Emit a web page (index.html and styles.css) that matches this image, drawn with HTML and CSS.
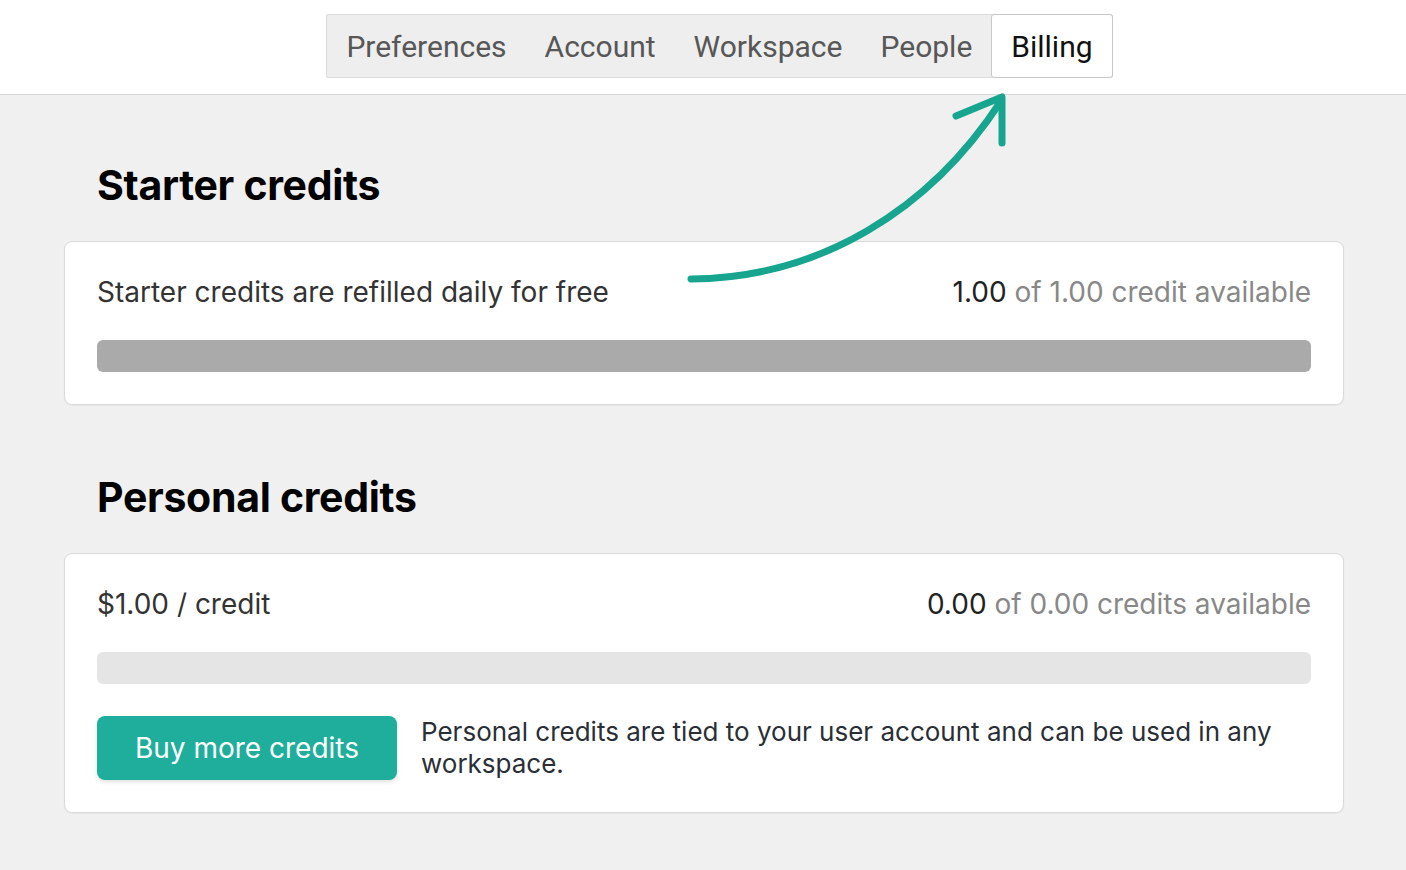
FILE: index.html
```html
<!DOCTYPE html>
<html>
<head>
<meta charset="utf-8">
<link rel="stylesheet" href="styles.css">
</head>
<body>
<header class="topbar">
  <nav class="tabs">
    <span class="tab">Preferences</span>
    <span class="tab">Account</span>
    <span class="tab">Workspace</span>
    <span class="tab">People</span>
    <span class="tab active">Billing</span>
  </nav>
</header>
<main class="content">
  <section class="section">
    <h2 class="heading">Starter credits</h2>
    <div class="card">
      <div class="row">
        <span class="label">Starter credits are refilled daily for free</span>
        <span class="amount"><b>1.00</b> of 1.00 credit available</span>
      </div>
      <div class="bar bar-full"></div>
    </div>
  </section>
  <section class="section">
    <h2 class="heading">Personal credits</h2>
    <div class="card">
      <div class="row">
        <span class="label">$1.00 / credit</span>
        <span class="amount"><b>0.00</b> of 0.00 credits available</span>
      </div>
      <div class="bar bar-empty"></div>
      <div class="actions">
        <button class="buy">Buy more credits</button>
        <p class="note">Personal credits are tied to your user account and can be used in any workspace.</p>
      </div>
    </div>
  </section>
</main>
<svg class="arrow" width="1406" height="300" viewBox="0 0 1406 300">
  <path d="M691 279 C 820 278, 930 210, 1001 101" fill="none" stroke="#17a590" stroke-width="7" stroke-linecap="round"/>
  <path d="M956 116 L 1002 97 L 1002 143" fill="none" stroke="#17a590" stroke-width="7" stroke-linecap="round" stroke-linejoin="round"/>
</svg>
</body>
</html>
```
FILE: styles.css
```css
* { box-sizing: border-box; }
html, body { margin: 0; padding: 0; }
body {
  background: #f0f0f0;
  font-family: Inter, "Noto Sans", sans-serif;
  color: #333;
  width: 1406px;
  height: 870px;
  overflow: hidden;
  position: relative;
}
.topbar {
  background: #fff;
  height: 95px;
  border-bottom: 1px solid #d6d6d6;
  display: flex;
  justify-content: center;
  padding-top: 14px;
}
.tabs {
  display: flex;
  height: 64px;
  background: #eeeeee;
  border: 1px solid #dcdcdc;
  border-radius: 2px;
  margin-left: 33px;
}
.tab {
  font-family: Roboto, sans-serif;
  font-size: 30px;
  color: #575757;
  padding: 0 19px;
  display: flex;
  align-items: center;
  height: 62px;
}
.tab.active {
  background: #fff;
  color: #111;
  border: 1px solid #c8c8c8;
  border-radius: 3px;
  height: 64px;
  margin: -1px -1px -1px 0;
}
.content {
  padding: 0 62px 0 64px;
}
.section { padding-top: 62px; }
.section + .section { padding-top: 64px; }
.heading {
  margin: 0 0 28px 33px;
  font-size: 41px;
  font-weight: 700;
  color: #000;
  line-height: 56px;
  letter-spacing: -0.3px;
}
.card {
  background: #fff;
  border: 1px solid #dadada;
  border-radius: 8px;
  padding: 30px 32px 32px 32px;
  box-shadow: 0 1px 2px rgba(0,0,0,0.04);
}
.row {
  display: flex;
  justify-content: space-between;
  align-items: center;
  font-size: 28px;
  line-height: 40px;
}
.label { color: #333; }
.amount { color: #888; }
.amount b { font-weight: 400; color: #222; }
.bar {
  height: 32px;
  border-radius: 6px;
  margin-top: 28px;
}
.bar-full { background: #aaaaaa; }
.bar-empty { background: #e5e5e5; }
.actions {
  display: flex;
  align-items: center;
  gap: 24px;
  margin-top: 32px;
}
.buy {
  flex: none;
  width: 300px;
  height: 64px;
  background: #1fae9c;
  color: #fff;
  border: none;
  border-radius: 8px;
  font-family: Inter, sans-serif;
  font-size: 28px;
  box-shadow: 0 2px 4px rgba(0,0,0,0.12);
}
.note {
  margin: 0;
  font-size: 26px;
  line-height: 32px;
  color: #2a2f36;
}
.arrow {
  position: absolute;
  left: 0;
  top: 0;
  pointer-events: none;
}
```
